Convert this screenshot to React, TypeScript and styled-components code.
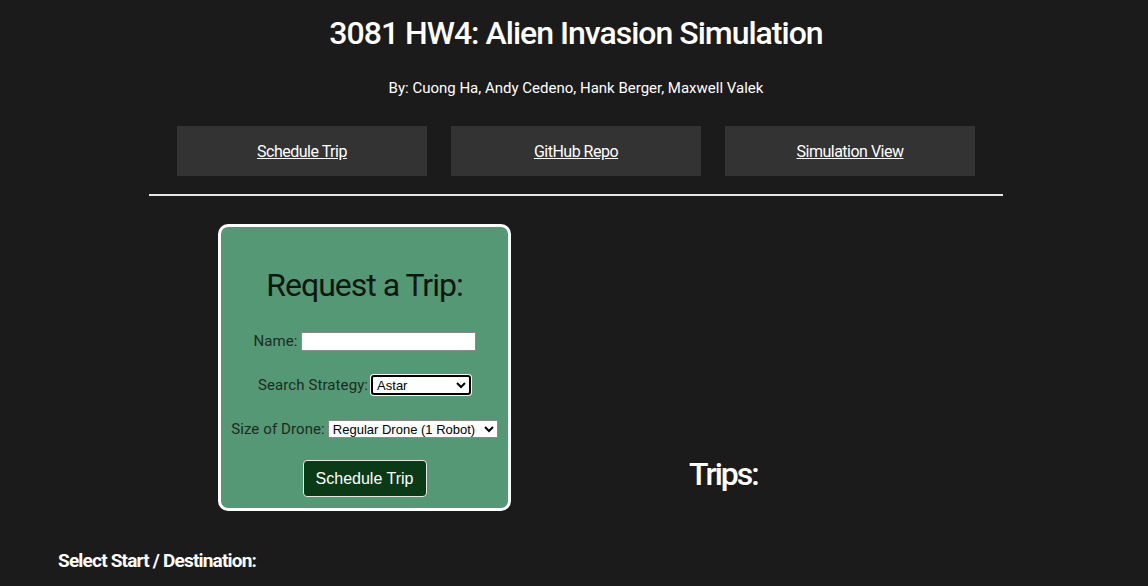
import styled, { createGlobalStyle } from "styled-components";

const GlobalStyle = createGlobalStyle`
  html, body {
    overflow: hidden;
  }
  body {
    margin: 0;
    background: #1b1b1b;
    color: #ffffff;
    font-family: Roboto, "Noto Sans", sans-serif;
  }
`;

const Page = styled.div`
  display: flex;
  flex-direction: column;
  width: 1148px;
`;

const Header = styled.header`
  display: flex;
  flex-direction: column;
  align-items: center;
  padding-left: 4px;
`;

const Title = styled.h1`
  margin: 14px 0 0;
  font-size: 32px;
  line-height: 38px;
  font-weight: 500;
  letter-spacing: -1px;
`;

const Authors = styled.p`
  margin: 26px 0 0;
  font-size: 15px;
  line-height: 20px;
  letter-spacing: 0;
`;

const Nav = styled.nav`
  display: flex;
  gap: 24px;
  margin-top: 28px;
`;

const NavButton = styled.div`
  width: 250px;
  height: 50px;
  display: flex;
  align-items: center;
  justify-content: center;
  background: #333333;
  a {
    color: #ffffff;
    font-size: 16px;
    letter-spacing: -0.5px;
    text-decoration: underline;
  }
`;

const Divider = styled.hr`
  width: 854px;
  margin: 18px 0 0 149px;
  border: none;
  border-top: 2px solid #e6e6e6;
`;

const Main = styled.main`
  display: flex;
  align-items: flex-end;
  gap: 178px;
  padding-left: 218px;
  margin-top: 28px;
`;

const Card = styled.section`
  width: 287px;
  height: 281px;
  box-sizing: content-box;
  border: 3px solid #ffffff;
  border-radius: 10px;
  background: #559875;
  display: flex;
  flex-direction: column;
  align-items: center;
`;

const CardTitle = styled.h2`
  margin: 39px 0 0;
  font-size: 32px;
  line-height: 38px;
  font-weight: 400;
  color: #0b1710;
  letter-spacing: -1px;
`;

const Field = styled.div<{ $top: number }>`
  display: flex;
  align-items: center;
  gap: 3px;
  margin-top: ${(p) => p.$top}px;
  height: 20px;
  label {
    font-size: 15px;
    color: #1c2c22;
    letter-spacing: 0.1px;
  }
`;

const TextInput = styled.input`
  width: 175px;
  height: 19px;
  box-sizing: border-box;
  border: 1px solid #8a8a8a;
  background: #ffffff;
  padding: 0 2px;
`;

const Select = styled.select<{ $width: number; $focused?: boolean }>`
  width: ${(p) => p.$width}px;
  height: ${(p) => (p.$focused ? 20 : 18)}px;
  box-sizing: border-box;
  font-family: "Liberation Sans", Arial, sans-serif;
  font-size: 13px;
  color: #000000;
  background: #ffffff;
  border: ${(p) => (p.$focused ? "2px solid #000" : "1px solid #8a8a8a")};
  border-radius: ${(p) => (p.$focused ? "3px" : "0")};
  box-shadow: ${(p) => (p.$focused ? "0 0 0 1px #ffffff" : "none")};
  padding: 0;
`;

const SubmitButton = styled.button`
  margin-top: 21px;
  width: 124px;
  height: 37px;
  background: #0b3b16;
  color: #ffffff;
  border: 1px solid #e8e8e8;
  border-radius: 4px;
  font-family: "Liberation Sans", Arial, sans-serif;
  font-size: 16px;
`;

const TripsHeading = styled.h2`
  margin: 0 0 18px;
  font-size: 32px;
  line-height: 38px;
  font-weight: 500;
  letter-spacing: -2px;
`;

const SectionHeading = styled.h3`
  margin: 39px 0 0 58px;
  font-size: 19px;
  line-height: 22px;
  font-weight: 700;
  letter-spacing: -0.8px;
`;

export default function App() {
  return (
    <Page>
      <GlobalStyle />
      <Header>
        <Title>3081 HW4: Alien Invasion Simulation</Title>
        <Authors>By: Cuong Ha, Andy Cedeno, Hank Berger, Maxwell Valek</Authors>
        <Nav>
          <NavButton>
            <a href="#schedule">Schedule Trip</a>
          </NavButton>
          <NavButton>
            <a href="#repo">GitHub Repo</a>
          </NavButton>
          <NavButton>
            <a href="#sim">Simulation View</a>
          </NavButton>
        </Nav>
      </Header>
      <Divider />
      <Main>
        <Card>
          <CardTitle>Request a Trip:</CardTitle>
          <Field $top={27}>
            <label htmlFor="name">Name:</label>
            <TextInput id="name" type="text" />
          </Field>
          <Field $top={24}>
            <label htmlFor="strategy">Search Strategy:</label>
            <Select id="strategy" $width={100} $focused>
              <option>Astar</option>
              <option>Dijkstra</option>
              <option>DFS</option>
              <option>BFS</option>
            </Select>
          </Field>
          <Field $top={24}>
            <label htmlFor="drone">Size of Drone:</label>
            <Select id="drone" $width={170}>
              <option>Regular Drone (1 Robot)</option>
              <option>Large Drone (2 Robots)</option>
            </Select>
          </Field>
          <SubmitButton type="button">Schedule Trip</SubmitButton>
        </Card>
        <TripsHeading>Trips:</TripsHeading>
      </Main>
      <SectionHeading>Select Start / Destination:</SectionHeading>
    </Page>
  );
}
